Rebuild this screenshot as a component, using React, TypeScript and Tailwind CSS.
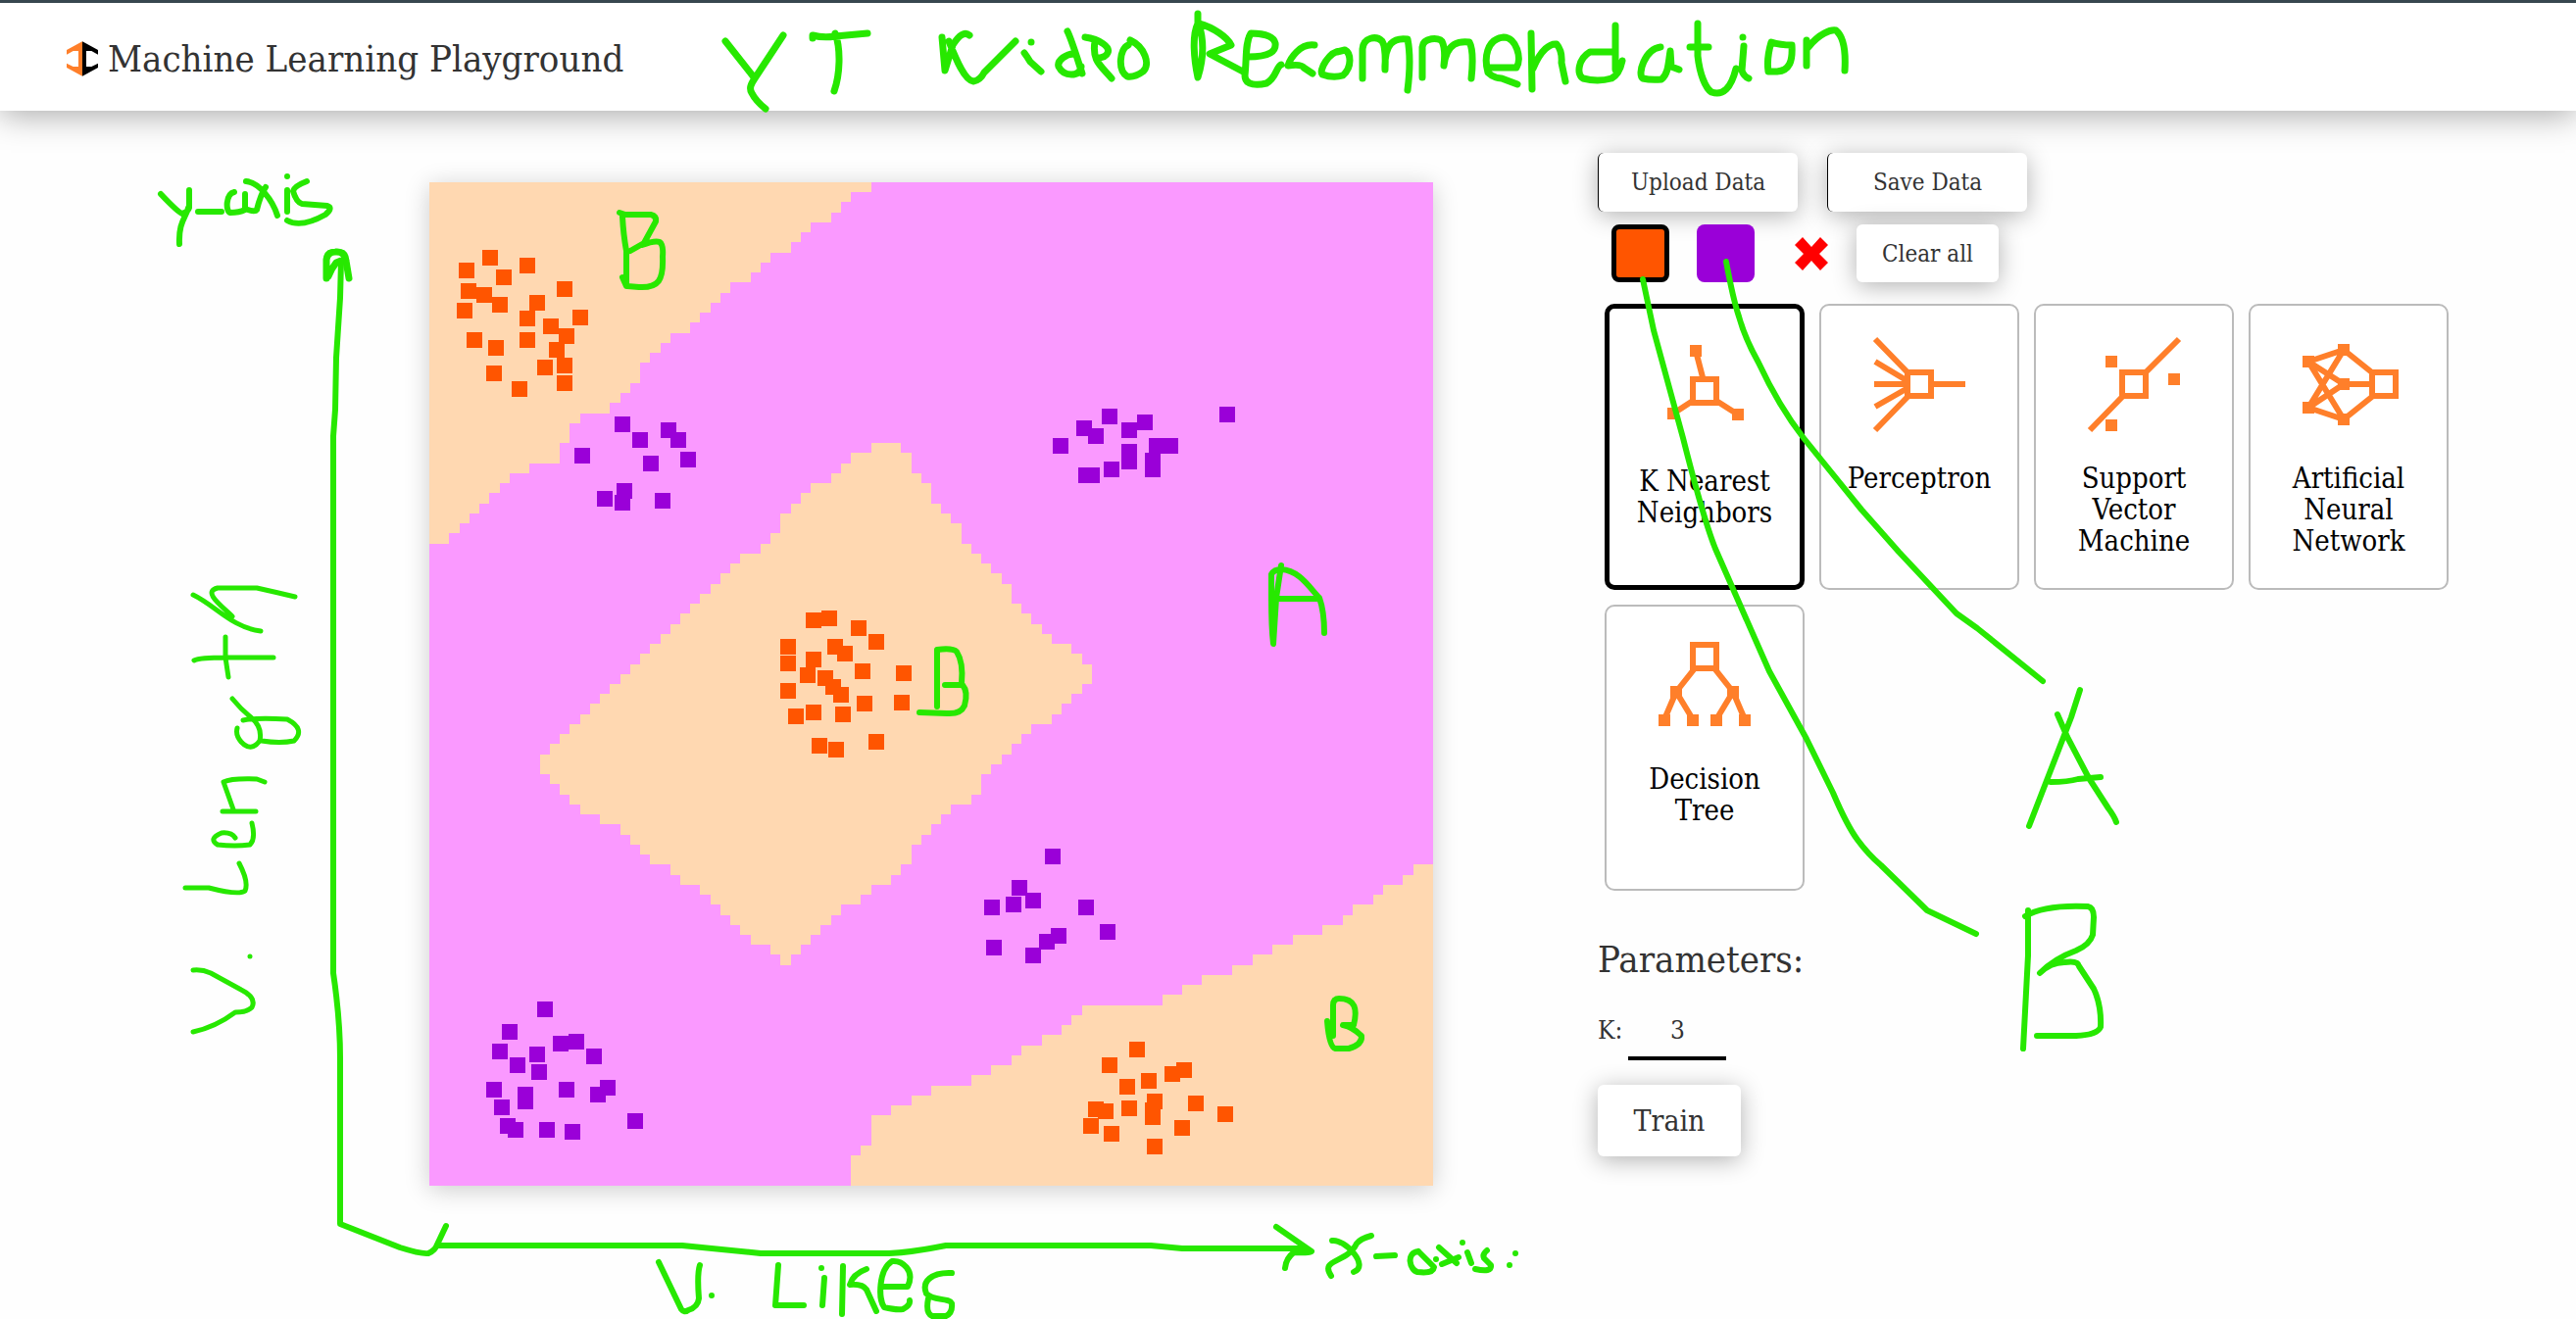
import React, { useState } from "react";

const FONT = "font-['Roboto_Slab','DejaVu_Serif_Condensed','DejaVu_Serif',serif]";
const CELLS = 100;

/* Each run is [row, first column, column after the last] of the orange class. */
const topLeftEnds = [
  44, 42, 41, 40, 38, 37, 36, 34, 33, 32, 30, 29, 28, 27, 26, 24, 23, 22, 21, 21, 20, 19, 18, 15, 14,
  14, 13, 13, 10, 8, 7, 6, 5, 4, 3, 2,
];
const diamond: [number, number][] = [
  [44, 47], [42, 48], [41, 48], [40, 49], [38, 50], [37, 50], [36, 51], [35, 52], [35, 53], [34, 53],
  [33, 54], [31, 55], [30, 56], [29, 57], [28, 58], [27, 58], [26, 59], [25, 60], [24, 61], [23, 62],
  [22, 64], [21, 65], [20, 66], [19, 66], [18, 65], [17, 64], [16, 63], [15, 62], [14, 60], [13, 59],
  [12, 58], [11, 57], [11, 56], [12, 55], [13, 55], [14, 54], [15, 52], [17, 51], [19, 50], [20, 49],
  [21, 48], [22, 48], [24, 47], [25, 46], [27, 44], [28, 43], [29, 41], [30, 40], [31, 39], [32, 38],
  [34, 37], [35, 36],
];
const bottomRightStarts = [
  98, 97, 95, 94, 92, 91, 89, 86, 84, 82, 80, 77, 75, 73, 65, 64, 63, 61, 59, 58, 56, 54, 50, 48, 46,
  44, 44, 44, 43, 42, 42, 42,
];
const runs: [number, number, number][] = [
  ...topLeftEnds.map((e, i): [number, number, number] => [i, 0, e]),
  ...diamond.map(([s, e], i): [number, number, number] => [i + 26, s, e]),
  ...bottomRightStarts.map((s, i): [number, number, number] => [i + 68, s, CELLS]),
];
const orangeRegion = runs.map(([r, s, e]) => `M${s} ${r}H${e}V${r + 1}H${s}Z`).join("");

const orangePoints: [number, number][] = [
  [62, 77], [38, 90], [100, 85], [76, 97], [40, 111], [56, 115], [72, 125], [36, 131], [138, 109],
  [110, 123], [154, 138], [100, 139], [124, 147], [140, 157], [46, 161], [100, 161], [68, 169],
  [130, 171], [118, 189], [138, 187], [138, 205], [66, 195], [92, 211],
  [392, 447], [408, 445], [438, 455], [456, 469], [366, 474], [414, 474], [424, 481], [366, 491],
  [392, 487], [386, 503], [404, 506], [442, 499], [484, 501], [412, 515], [420, 523], [366, 519],
  [374, 545], [392, 541], [422, 543], [444, 532], [482, 531], [398, 575], [415, 579], [456, 571],
  [722, 885], [694, 901], [758, 910], [770, 906], [734, 917], [712, 923], [714, 945], [680, 946],
  [690, 948], [675, 963], [696, 971], [740, 938], [738, 947], [738, 954], [782, 940], [768, 965],
  [812, 951], [740, 984],
];
const purplePoints: [number, number][] = [
  [197, 247], [215, 263], [244, 253], [254, 263], [156, 279], [226, 287], [264, 283], [179, 323],
  [199, 315], [197, 327], [238, 325],
  [694, 239], [730, 245], [814, 237], [668, 251], [680, 259], [714, 253], [644, 269], [742, 269],
  [756, 269], [714, 275], [714, 285], [738, 284], [738, 293], [696, 293], [670, 299], [676, 299],
  [118, 844], [82, 867], [72, 887], [90, 901], [110, 890], [134, 879], [150, 877], [112, 908],
  [168, 892], [66, 926], [98, 931], [98, 938], [140, 926], [182, 924], [172, 931], [74, 944],
  [80, 963], [88, 967], [120, 967], [146, 969], [210, 958],
  [636, 688], [602, 720], [596, 737], [616, 733], [574, 740], [670, 740], [692, 765], [642, 769],
  [630, 775], [576, 781], [616, 789],
];

function Plot() {
  return (
    <svg
      viewBox="0 0 1024 1024"
      role="img"
      aria-label="Classified training points"
      className="block aspect-square w-full bg-[#fa99ff] shadow-[0_4px_24px_rgba(0,0,0,0.2)]"
    >
      <path d={orangeRegion} transform="scale(10.24)" fill="#ffd8b1" shapeRendering="crispEdges" />
      {orangePoints.map(([x, y], i) => (
        <rect key={i} x={x - 8} y={y - 8} width="16" height="16" fill="#ff5500" />
      ))}
      {purplePoints.map(([x, y], i) => (
        <rect key={i} x={x - 8} y={y - 8} width="16" height="16" fill="#9a00d8" />
      ))}
    </svg>
  );
}

type Drawing = { lines: string; squares: [number, number][]; box: [number, number] };

const drawings: Record<string, Drawing> = {
  knn: {
    lines: "M47 19L54 46M44 70L24 83M68 70L90 84",
    squares: [[47, 19], [24, 83], [90, 84]],
    box: [56, 60],
  },
  perceptron: {
    lines: "M11 10L45 45M11 33L46 54M10 56H42M11 79L46 59M11 103L45 68M70 56H103",
    squares: [],
    box: [56, 56],
  },
  svm: {
    lines: "M102 10L67 45M11 103L45 68",
    squares: [[33, 33], [97, 51], [33, 98]],
    box: [56, 56],
  },
  ann: {
    lines:
      "M15 33L51 21M15 33L51 56M15 33L51 92M15 80L51 21M15 80L51 56M15 80L51 92M51 21L81 45M51 56H78M51 92L81 68",
    squares: [[51, 21], [15, 33], [51, 56], [15, 80], [51, 92]],
    box: [92, 56],
  },
  tree: {
    lines: "M46 39L27 63M66 39L85 63M27 63L15 91M27 63L44 91M85 63L68 91M85 63L97 91",
    squares: [[27, 63], [85, 63], [15, 92], [44, 92], [68, 92], [97, 92]],
    box: [56, 27],
  },
};

function ModelIcon({ name }: { name: string }) {
  const { lines, squares, box } = drawings[name];
  return (
    <svg viewBox="0 0 112 112" className="size-28 shrink-0" aria-hidden="true">
      <path d={lines} stroke="#ff7f2a" strokeWidth="6" fill="none" />
      {squares.map(([x, y], i) => (
        <rect key={i} x={x - 6} y={y - 6} width="12" height="12" fill="#ff7f2a" />
      ))}
      <rect x={box[0] - 12} y={box[1] - 12} width="24" height="24" fill="#fff" stroke="#ff7f2a" strokeWidth="6" />
    </svg>
  );
}

const models = [
  { id: "knn", label: "K Nearest Neighbors" },
  { id: "perceptron", label: "Perceptron" },
  { id: "svm", label: "Support Vector Machine" },
  { id: "ann", label: "Artificial Neural Network" },
  { id: "tree", label: "Decision Tree" },
];

const SHADOW = "shadow-[0_4px_24px_rgba(0,0,0,0.3)]";

function ActionButton({ className, children }: { className: string; children: React.ReactNode }) {
  return (
    <button type="button" className={`rounded-md bg-white text-[#333] ${SHADOW} ${className}`}>
      {children}
    </button>
  );
}

const strokes: { label: string; width: number; d: string }[] = [
  {
    label: "YT Video Recommendation",
    width: 7,
    d:
      "M740 42L770 80M799 36L770 80C766 86 764 90 767 95Q771 103 781 111" +
      "M829 39V36Q840 39 852 37L885 34M852 34C858 50 857 76 851 93" +
      "M961 38L964 72L972 46Q982 30 989 36M968 42C975 60 984 82 993 83Q1000 82 1004 74L1036 42" +
      "M1052 43V43M1045 54Q1048 58 1051 63L1062 73" +
      "M1089 32C1093 40 1096 50 1104 75M1097 55C1088 54 1078 62 1080 68Q1084 76 1093 76Q1102 76 1103 68" +
      "M1107 38C1122 40 1133 48 1130 54Q1128 59 1119 59M1117 42C1114 62 1122 66 1134 80" +
      "M1153 41C1168 48 1174 66 1166 73Q1158 79 1150 78C1140 72 1142 50 1151 46" +
      "M1222 14V24C1216 36 1218 60 1222 79C1228 60 1228 40 1223 24C1238 28 1252 38 1256 46L1234 55L1268 73" +
      "M1273 58C1296 58 1302 52 1301 44C1299 36 1286 34 1276 34C1270 44 1272 60 1270 77C1270 88 1284 87 1292 85C1302 80 1302 68 1307 66" +
      "M1341 46C1326 44 1316 60 1314 67Q1328 65 1330 69L1339 75" +
      "M1368 52C1356 52 1345 72 1349 76Q1360 80 1370 77C1380 68 1378 54 1372 51L1364 53" +
      "M1390 80V50C1391 38 1404 36 1410 42Q1414 48 1413 71C1412 44 1422 38 1436 40Q1440 60 1436 92" +
      "M1451 79V48C1452 38 1468 38 1471 42Q1475 50 1473 67C1476 42 1490 42 1499 43Q1504 52 1501 80" +
      "M1520 69H1547C1553 60 1547 38 1534 38C1516 40 1514 60 1518 74Q1524 80 1532 80L1548 86" +
      "M1562 34L1563 91M1564 70C1572 50 1582 44 1588 45Q1594 52 1593 64L1597 83" +
      "M1648 26V71M1648 53H1622C1610 60 1608 76 1615 80Q1630 84 1644 80Q1652 76 1655 62" +
      "M1694 48C1678 50 1670 76 1676 80Q1684 82 1695 81C1702 76 1702 64 1704 52L1705 68L1713 71" +
      "M1732 24V57C1734 76 1740 90 1746 94C1758 98 1766 90 1771 70M1724 48H1743" +
      "M1778 38V38M1779 47L1777 72Q1779 78 1784 80" +
      "M1807 43Q1816 46 1828 46C1829 62 1826 72 1813 73H1804Q1802 60 1807 43" +
      "M1843 67V41M1845 48C1856 34 1868 30 1873 31Q1884 40 1882 72",
  },
  {
    label: "y-axis",
    width: 6,
    d:
      "M164 198Q182 217 186 218Q192 216 193 212V194M192 212C190 222 182 226 183 249M202 216H226" +
      "M239 196C230 198 230 216 235 217Q244 217 250 214V198M250 213Q260 217 262 214Q266 198 271 191M251 185C264 186 278 204 283 220" +
      "M293 180V180M293 194V216M313 185Q300 190 299 195Q302 206 308 208L334 210Q340 212 332 219C316 228 302 230 293 225",
  },
  { label: "y-axis arrow", width: 7, d: "M333 284V265Q334 257 342 257Q352 256 353 266L356 284M335 282Q338 274 343 268L348 266" },
  {
    label: "y-axis line",
    width: 6,
    d:
      "M348 266L347 304L343 365L342 418L340 445V993Q347 1040 347 1080V1249L408 1273Q430 1280 437 1279Q444 1276 446 1270L455 1251" +
      "M447 1271H696L776 1279H907Q930 1278 965 1271H1174L1206 1274H1330M1302 1252L1338 1277Q1334 1279 1320 1278Q1312 1284 1311 1294",
  },
  {
    label: "x-axis",
    width: 6,
    d:
      "M1359 1266C1372 1264 1398 1292 1381 1298M1399 1261Q1388 1264 1384 1269C1374 1290 1346 1284 1358 1302M1404 1282L1423 1281" +
      "M1447 1277C1434 1278 1438 1296 1446 1298Q1462 1300 1463 1293L1447 1277M1465 1285V1285M1468 1273L1486 1289M1471 1290L1488 1283" +
      "M1492 1268V1268M1497 1278L1501 1289M1517 1276Q1512 1280 1514 1284L1521 1291Q1522 1299 1505 1295M1546 1279V1279M1540 1291V1291",
  },
  {
    label: "V. Likes",
    width: 6,
    d:
      "M672 1288L695 1336Q698 1340 702 1337Q712 1334 713 1325Q711 1300 714 1291M726 1322V1322M794 1291L791 1332H820M838 1294V1294M841 1304L839 1332" +
      "M860 1292L859 1341M884 1295Q870 1300 867 1311Q880 1310 884 1316L894 1338M902 1313H926C934 1296 920 1286 910 1287C896 1296 896 1326 902 1334Q914 1337 921 1336Q929 1332 928 1327" +
      "M971 1299C950 1298 940 1308 945 1320C952 1328 968 1324 971 1330Q972 1340 965 1343H951Q944 1340 947 1325",
  },
  {
    label: "V. Length",
    width: 5,
    d:
      "M197 607C220 618 236 640 266 644M237 629C226 618 206 604 222 600H262Q280 604 301 609M198 674Q204 671 230 671H279M230 650V671L233 691" +
      "M237 713Q246 724 256 732Q268 742 265 756Q256 768 246 757Q240 750 242 743M248 735Q262 732 293 734Q312 744 300 756Q286 759 267 756" +
      "M227 828H261M238 826L228 798Q236 794 262 795L270 798M240 855Q236 849 226 850Q212 856 222 862Q240 864 255 862Q261 856 257 840" +
      "M189 906H213Q244 914 250 909Q254 900 244 881M255 976V976M197 990Q206 989 215 993L246 1010Q262 1018 257 1028Q252 1033 240 1033Q220 1048 197 1053",
  },
  {
    label: "B",
    width: 6,
    d:
      "M632 217L638 219H664Q670 220 669 226L657 248L643 256M655 250Q668 245 673 247Q677 250 676 262C677 286 672 294 652 293L640 292M635 221Q636 240 639 256V292L635 283",
  },
  { label: "A", width: 6, d: "M1307 577L1302 610L1299 657Q1297 640 1297 610V586Q1300 581 1307 581C1326 582 1336 600 1346 610Q1351 624 1351 646M1303 611H1345" },
  { label: "B", width: 6, d: "M956 721V663Q972 661 976 665Q983 676 981 697M964 699H982Q988 706 984 720Q980 729 966 728L938 727" },
  { label: "B", width: 6, d: "M1354 1042Q1356 1068 1362 1070H1376Q1390 1066 1389 1057Q1380 1048 1370 1046H1381C1385 1030 1383 1019 1366 1019Q1360 1019 1360 1026V1057" },
  { label: "Orange class is B", width: 6, d: "M1676 285L1687 337L1717 447Q1738 530 1750 560L1805 685L1843 754L1870 809Q1884 842 1895 857T1919 883L1966 929L2016 953" },
  { label: "Purple class is A", width: 6, d: "M1761 267Q1768 305 1774 323Q1780 345 1794 370Q1815 415 1840 447L1899 520L1937 563L1996 626L2017 641L2084 695" },
  { label: "A", width: 6, d: "M2122 704L2113 732L2070 843M2099 729L2109 752L2131 794L2151 825Q2157 833 2159 839M2092 798Q2110 798 2120 795L2143 793" },
  {
    label: "B",
    width: 6,
    d: "M2069 929V975L2064 1070M2066 935Q2086 923 2130 925Q2136 926 2136 936L2135 954Q2132 964 2118 970Q2096 978 2081 993Q2092 982 2106 982Q2120 980 2121 986L2136 1009Q2144 1026 2143 1048Q2140 1056 2118 1057H2078",
  },
];

function Annotations() {
  return (
    <svg
      viewBox="0 0 2628 1346"
      className="pointer-events-none absolute inset-x-0 top-0 z-10 w-full"
      fill="none"
      stroke="#27e800"
      strokeLinecap="round"
      strokeLinejoin="round"
    >
      {strokes.map((s, i) => (
        <path key={i} d={s.d} strokeWidth={s.width} aria-label={s.label} />
      ))}
    </svg>
  );
}

export default function App() {
  const [model, setModel] = useState("knn");
  const [k, setK] = useState("3");

  return (
    <div className={`relative min-h-screen overflow-x-hidden bg-[#fefefe] text-[#333] ${FONT}`}>
      <header className="flex h-[113px] items-center border-t-[3px] border-[#37474f] bg-white px-[68px] pt-1 shadow-[0_4px_32px_rgba(0,0,0,0.35)]">
        <a href="#" className="flex items-center gap-2.5">
          <svg viewBox="0 0 96 106" className="h-9 w-8" aria-hidden="true">
            <path d="M48 0L0 26V40L20 29H36V77H20L0 67V80L48 106Z" fill="#ff7f2a" />
            <path d="M48 0L96 26V40L76 29H60V77H76L96 67V80L48 106Z" fill="#000" />
          </svg>
          <span className="text-[38px] leading-none whitespace-nowrap">Machine Learning Playground</span>
        </a>
      </header>

      <main className="grid grid-cols-[438fr_1024fr_168fr_998fr] pb-16">
        <section className="col-start-2 min-w-0 pt-[73px]">
          <Plot />
        </section>

        <section className="col-start-4 min-w-0 pt-[43px]">
          <div className="flex gap-[30px]">
            <ActionButton className="h-[60px] w-[204px] border-l border-black text-[24px]">Upload Data</ActionButton>
            <ActionButton className="h-[60px] w-[204px] border-l border-black text-[24px]">Save Data</ActionButton>
          </div>

          <div className="mt-[13px] flex items-center pl-3.5">
            <button type="button" aria-label="Orange class" className="size-[59px] rounded-lg border-[5px] border-black bg-[#ff5500]" />
            <button type="button" aria-label="Purple class" className="ml-7 size-[59px] rounded-lg bg-[#9a00d8]" />
            <button type="button" aria-label="Erase points" className="ml-10">
              <svg viewBox="0 0 36 36" className="size-9" aria-hidden="true">
                <path d="M9 1L18 11L27 1L35 9L26 18L35 27L27 35L18 25L9 35L1 27L10 18L1 9Z" fill="#f00" />
              </svg>
            </button>
            <ActionButton className="ml-7 h-[59px] w-[145px] text-[24px]">Clear all</ActionButton>
          </div>

          <div role="radiogroup" aria-label="Model" className="mt-[22px] flex max-w-[890px] flex-wrap gap-[15px] pl-[7px]">
            {models.map((m) => (
              <button
                key={m.id}
                type="button"
                role="radio"
                aria-checked={model === m.id}
                onClick={() => setModel(m.id)}
                className={`flex h-[292px] w-[204px] flex-col items-center gap-6 rounded-[10px] bg-white px-3.5 text-center text-[29px] leading-8 text-black ${
                  model === m.id ? "border-[5px] border-black pt-6" : "border-2 border-[#bbb] pt-6"
                }`}
              >
                <ModelIcon name={m.id} />
                <span>{m.label}</span>
              </button>
            ))}
          </div>

          <h2 className="mt-12 text-[38px] leading-[44px]">Parameters:</h2>

          <div className="mt-7 flex items-start gap-1.5 text-[26px]">
            <label htmlFor="k" className="leading-[44px]">K:</label>
            <input
              id="k"
              value={k}
              onChange={(e) => setK(e.target.value)}
              className="h-[53px] w-[100px] border-b-4 border-black bg-transparent pb-[5px] text-center outline-none"
            />
          </div>

          <ActionButton className="mt-[25px] h-[73px] w-[146px] text-[30px]">Train</ActionButton>
        </section>
      </main>

      <Annotations />
    </div>
  );
}
